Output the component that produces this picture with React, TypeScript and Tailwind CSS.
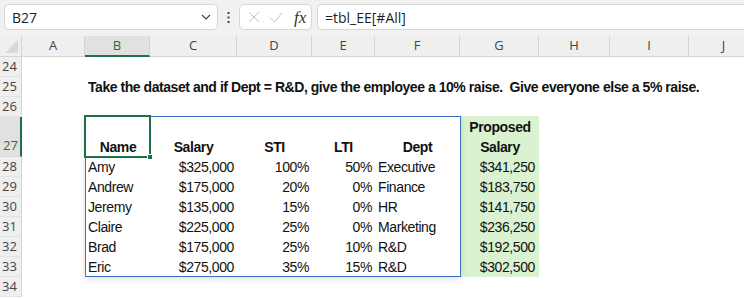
import React from "react";

type Col = { key: string; w: string; active?: boolean };

const columns: Col[] = [
  { key: "A", w: "w-[63px]" },
  { key: "B", w: "w-[65px]", active: true },
  { key: "C", w: "w-[87px]" },
  { key: "D", w: "w-[75px]" },
  { key: "E", w: "w-[63px]" },
  { key: "F", w: "w-[85px]" },
  { key: "G", w: "w-[79px]" },
  { key: "H", w: "w-[71px]" },
  { key: "I", w: "w-[79px]" },
  { key: "J", w: "w-[70px]" },
];

const employees = [
  { name: "Amy", salary: "$325,000", sti: "100%", lti: "50%", dept: "Executive", proposed: "$341,250" },
  { name: "Andrew", salary: "$175,000", sti: "20%", lti: "0%", dept: "Finance", proposed: "$183,750" },
  { name: "Jeremy", salary: "$135,000", sti: "15%", lti: "0%", dept: "HR", proposed: "$141,750" },
  { name: "Claire", salary: "$225,000", sti: "25%", lti: "0%", dept: "Marketing", proposed: "$236,250" },
  { name: "Brad", salary: "$175,000", sti: "25%", lti: "10%", dept: "R&D", proposed: "$192,500" },
  { name: "Eric", salary: "$275,000", sti: "35%", lti: "15%", dept: "R&D", proposed: "$302,500" },
];

const rowHeaders = [
  { n: 24, h: "h-5" },
  { n: 25, h: "h-5" },
  { n: 26, h: "h-5" },
  { n: 27, h: "h-[40px]", active: true },
  { n: 28, h: "h-5" },
  { n: 29, h: "h-5" },
  { n: 30, h: "h-5" },
  { n: 31, h: "h-5" },
  { n: 32, h: "h-5" },
  { n: 33, h: "h-5" },
  { n: 34, h: "h-5" },
];

function FormulaBar() {
  return (
    <div className="flex h-[36px] items-start bg-[#f1f1f1] pt-[4px] font-['Open_Sans','Noto_Sans',sans-serif] text-[14px] text-[#1f1f1f]">
      {/* name box */}
      <div className="ml-[4px] flex h-[26px] w-[214px] items-center justify-between rounded-[5px] border border-[#d6d6d6] bg-white pr-[6px] pl-[7px]">
        <span>B27</span>
        <svg width="10" height="6" viewBox="0 0 10 6">
          <path d="M1 1l4 4 4-4" fill="none" stroke="#444" strokeWidth="1.2" />
        </svg>
      </div>
      <div className="flex h-[26px] w-[21px] items-center justify-center">
        <svg width="3" height="11" viewBox="0 0 3 11">
          <rect x="0.5" y="0" width="2" height="2" fill="#444" />
          <rect x="0.5" y="4.5" width="2" height="2" fill="#444" />
          <rect x="0.5" y="9" width="2" height="2" fill="#444" />
        </svg>
      </div>
      {/* cancel / enter / insert function */}
      <div className="flex h-[26px] w-[73px] items-center rounded-[5px] border border-[#d6d6d6] bg-white pl-[8px]">
        <svg width="12" height="12" viewBox="0 0 12 12">
          <path d="M1 1l10 10M11 1L1 11" stroke="#c2c2c2" strokeWidth="1" />
        </svg>
        <svg className="ml-[9px]" width="14" height="11" viewBox="0 0 14 11">
          <path d="M1 5.5l4.5 4.5L13 1" fill="none" stroke="#c2c2c2" strokeWidth="1" />
        </svg>
        <span className="ml-[11px] font-['Liberation_Serif',serif] text-[17px] leading-none text-[#333] italic">
          fx
        </span>
      </div>
      <div className="ml-[5px] flex h-[26px] flex-1 items-center rounded-l-[5px] border border-r-0 border-[#d6d6d6] bg-white pl-[7px]">
        =tbl_EE[#All]
      </div>
    </div>
  );
}

function ColumnHeaders() {
  return (
    <div className="flex h-[21px] bg-[#efefef] font-['Open_Sans','Noto_Sans',sans-serif] text-[13px] text-[#444]">
      <div className="relative w-[22px] shrink-0 border-r border-b border-[#d4d4d4]">
        <svg className="absolute right-[3px] bottom-[3px]" width="13" height="13" viewBox="0 0 13 13">
          <polygon points="13,0 13,13 0,13" fill="#d9d9d9" />
        </svg>
      </div>
      {columns.map((c) => (
        <div
          key={c.key}
          className={
            c.active
              ? `${c.w} flex shrink-0 items-center justify-center border-r border-b-2 border-r-[#d4d4d4] border-b-[#1e7145] bg-[#e1e1e1] pt-[1px] text-[#1e7145]`
              : `${c.w} flex shrink-0 items-center justify-center border-r border-b border-[#d4d4d4]`
          }
        >
          {c.key}
        </div>
      ))}
    </div>
  );
}

function RowHeaders() {
  return (
    <div className="flex w-[22px] shrink-0 flex-col bg-[#efefef] font-['Open_Sans','Noto_Sans',sans-serif] text-[13px] text-[#444]">
      {rowHeaders.map((r) => (
        <div
          key={r.n}
          className={
            r.active
              ? `${r.h} flex items-end justify-center border-r-2 border-b border-r-[#1e7145] border-b-[#dadada] bg-[#e1e1e1] pb-[1px] pl-[1px] text-[#1e7145]`
              : `${r.h} flex items-center justify-center border-r border-b border-r-[#d4d4d4] border-b-[#e3e3e3] pr-[2px]`
          }
        >
          {r.n}
        </div>
      ))}
    </div>
  );
}

function EmployeeTable() {
  return (
    <div className="flex">
      <div className="w-[63px] shrink-0" />
      {/* table object B27:F33 */}
      <div className="relative w-[376px] shrink-0 border border-[#3a72c6] bg-white shadow-[0_2px_6px_rgba(0,0,0,0.12)]">
        <div className="flex h-[40px] items-end font-bold">
          <div className="w-[64px] text-center">Name</div>
          <div className="w-[87px] text-center">Salary</div>
          <div className="w-[75px] text-center">STI</div>
          <div className="w-[63px] text-center">LTI</div>
          <div className="w-[85px] text-center">Dept</div>
        </div>
        {employees.map((e, i) => (
          <div key={e.name} className={i === employees.length - 1 ? "flex h-[19px] items-start" : "flex h-5 items-center"}>
            <div className="w-[64px] pl-[2px]">{e.name}</div>
            <div className="w-[87px] pr-[3px] text-right">{e.salary}</div>
            <div className="w-[75px] pr-[3px] text-right">{e.sti}</div>
            <div className="w-[63px] pr-[3px] text-right">{e.lti}</div>
            <div className="w-[85px] pl-[3px]">{e.dept}</div>
          </div>
        ))}
        {/* active cell B27 */}
        <div className="absolute top-[-2px] left-[-2px] h-[43px] w-[67px] border-2 border-[#1e7145]">
          <div className="absolute right-[-4px] bottom-[-4px] h-[6px] w-[6px] border border-white bg-[#1e7145]" />
        </div>
      </div>
      {/* calculated column G */}
      <div className="w-[78px] shrink-0 bg-[#daf2d0]">
        <div className="flex h-[41px] items-end justify-center text-center font-bold">
          Proposed
          <br />
          Salary
        </div>
        {employees.map((e) => (
          <div key={e.name} className="h-5 pr-[4px] text-right">
            {e.proposed}
          </div>
        ))}
      </div>
    </div>
  );
}

export default function App() {
  return (
    <div className="h-[298px] w-[744px] overflow-hidden bg-white">
      <FormulaBar />
      <ColumnHeaders />
      <div className="flex">
        <RowHeaders />
        <div className="flex flex-1 flex-col font-['Liberation_Sans',sans-serif] text-[14px] leading-5 tracking-[-0.4px] text-[#111]">
          <div className="h-5" />
          <div className="h-5 pl-[66px] font-bold tracking-[-0.45px] whitespace-pre">
            Take the dataset and if Dept = R&amp;D, give the employee a 10% raise.  Give everyone else a 5% raise.
          </div>
          <div className="h-[19px]" />
          <EmployeeTable />
          <div className="h-5" />
        </div>
      </div>
    </div>
  );
}
